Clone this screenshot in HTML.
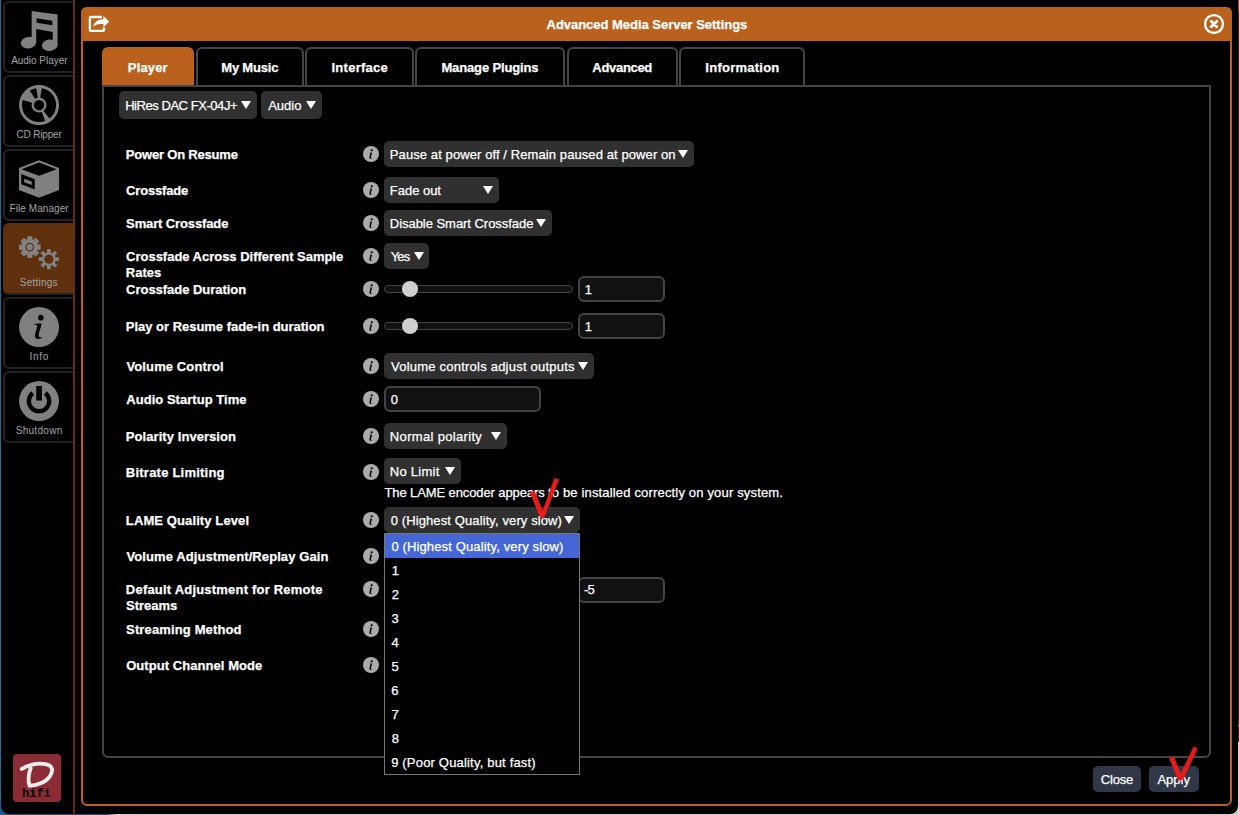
<!DOCTYPE html><html><head><meta charset="utf-8"><title>Advanced Media Server Settings</title><style>
*{box-sizing:border-box;margin:0;padding:0}
html,body{width:1239px;height:815px;overflow:hidden;background:#000}
body{position:relative;font-family:"Liberation Sans",sans-serif;font-size:13px;color:#fff}
.a{position:absolute}
.t{position:absolute;white-space:nowrap;line-height:16px;-webkit-text-stroke:0.25px #fff}
.b{font-weight:bold}
.sb{position:absolute;left:3px;width:72px;height:72px;border:2px solid #222;border-radius:6px 0 0 6px;border-right:none}
.sb.on{background:#5e300e;border-color:#5e300e #5e300e #232323 #5e300e}
.sl{position:absolute;white-space:nowrap;font-size:10px;color:#a4a4a4;line-height:12px}
.sel{position:absolute;height:26px;background:#303030;border-radius:5px}
.ar{position:absolute;width:0;height:0;border-left:5px solid transparent;border-right:5px solid transparent;border-top:8.5px solid #fff}
.inp{position:absolute;height:26px;background:#111;border:2px solid #444;border-radius:6px}
.trk{position:absolute;height:8px;width:189px;left:384px;background:#111;border:1.5px solid #444;border-radius:4px}
.thm{position:absolute;width:16px;height:16px;border-radius:8px;background:#d0d0d0}
.tab{position:absolute;top:47px;height:40px;border:2px solid #444;border-bottom:none;border-radius:6px 6px 0 0}
.tab.on{background:#b9611d;border-color:#b9611d}
.btn{position:absolute;top:766px;height:26px;background:#303848;border-radius:5px}
</style></head><body>
<div class="a" style="left:0;top:0;width:1239px;height:815px;background:linear-gradient(to right,#1c5a94 0,#17548f 108px,#cfcfcf 116px)"></div>
<div class="a" style="left:1px;top:0;width:1237px;height:813.5px;background:#000;border-radius:0 0 8px 8px"></div>
<div class="a" style="left:0;top:0;width:1px;height:800px;background:#326488"></div>
<div class="a" style="left:1px;top:0;width:1px;height:805px;background:#04080b"></div>
<div class="a" style="left:1238px;top:0;width:1px;height:742px;background:#262626"></div>
<div class="a" style="left:1238px;top:742px;width:1px;height:73px;background:#dcdcdc"></div>
<div class="a" style="left:1238px;top:724px;width:1px;height:3px;background:#a0561c"></div>
<div class="a" style="left:1238px;top:0;width:1px;height:12px;background:#8a4a18"></div>
<div class="sb" style="top:1px"></div>
<svg class="a" style="left:14px;top:6px" width="50" height="50" viewBox="0 0 815 815"><g fill="#808080"><path fill-rule="evenodd" d="M288 82L710 140V640H632V422L362 375V598H288ZM368 200L625 240V312L368 272Z"/><ellipse cx="237" cy="598" rx="126" ry="94" transform="rotate(-8 237 598)"/><ellipse cx="582" cy="640" rx="128" ry="94" transform="rotate(-8 582 640)"/></g></svg>
<div class="sb" style="top:75px"></div>
<svg class="a" style="left:14px;top:80px" width="50" height="50" viewBox="0 0 815 815"><circle cx="408" cy="408" r="302" fill="none" stroke="#808080" stroke-width="48"/><circle cx="408" cy="408" r="103" fill="none" stroke="#808080" stroke-width="38"/><path fill="#808080" d="M303.3 374.4L122.4 316.3A300 300 0 0 1 245.0 156.1L348.3 315.6A110 110 0 0 0 303.3 374.4ZM389.8 299.5L358.5 112.1A300 300 0 0 1 457.5 112.1L426.2 299.5A110 110 0 0 0 389.8 299.5ZM475.1 495.2L591.0 645.7A300 300 0 0 1 517.0 687.5L448.0 510.5A110 110 0 0 0 475.1 495.2Z"/></svg>
<div class="sb" style="top:149px"></div>
<svg class="a" style="left:14px;top:154px" width="50" height="50" viewBox="0 0 815 815"><path fill="#808080" fill-rule="evenodd" d="M408 100L735 228V585L408 712L82 585V228ZM408 140L695 250L408 355L122 250ZM118 328L338 412V580L118 495Z"/><path fill="#808080" d="M165 405L290 450V505L165 460Z"/></svg>
<div class="sb on" style="top:223px"></div>
<svg class="a" style="left:14px;top:228px" width="50" height="50" viewBox="0 0 815 815"><g fill="#828282"><rect x="216.0" y="136" width="84" height="176" rx="8" transform="rotate(0.0 258 312)"/><rect x="216.0" y="136" width="84" height="176" rx="8" transform="rotate(45.0 258 312)"/><rect x="216.0" y="136" width="84" height="176" rx="8" transform="rotate(90.0 258 312)"/><rect x="216.0" y="136" width="84" height="176" rx="8" transform="rotate(135.0 258 312)"/><rect x="216.0" y="136" width="84" height="176" rx="8" transform="rotate(180.0 258 312)"/><rect x="216.0" y="136" width="84" height="176" rx="8" transform="rotate(225.0 258 312)"/><rect x="216.0" y="136" width="84" height="176" rx="8" transform="rotate(270.0 258 312)"/><rect x="216.0" y="136" width="84" height="176" rx="8" transform="rotate(315.0 258 312)"/><circle cx="258" cy="312" r="134"/></g><circle cx="258" cy="312" r="60" fill="none" stroke="#5e300e" stroke-width="20"/><g fill="#828282"><rect x="538.0" y="342" width="60" height="166" rx="14" transform="rotate(0.0 568 508)"/><rect x="538.0" y="342" width="60" height="166" rx="14" transform="rotate(45.0 568 508)"/><rect x="538.0" y="342" width="60" height="166" rx="14" transform="rotate(90.0 568 508)"/><rect x="538.0" y="342" width="60" height="166" rx="14" transform="rotate(135.0 568 508)"/><rect x="538.0" y="342" width="60" height="166" rx="14" transform="rotate(180.0 568 508)"/><rect x="538.0" y="342" width="60" height="166" rx="14" transform="rotate(225.0 568 508)"/><rect x="538.0" y="342" width="60" height="166" rx="14" transform="rotate(270.0 568 508)"/><rect x="538.0" y="342" width="60" height="166" rx="14" transform="rotate(315.0 568 508)"/></g><circle cx="568" cy="508" r="94" fill="#5e300e" stroke="#828282" stroke-width="38"/></svg>
<div class="sb" style="top:297px"></div>
<svg class="a" style="left:14px;top:302px" width="50" height="50" viewBox="0 0 815 815"><circle cx="408" cy="408" r="326" fill="#808080"/><circle cx="437" cy="255" r="46" fill="#000"/><path fill="#000" d="M320 370C350 352 400 345 447 352C450 400 408 480 402 540C400 572 430 580 468 570C440 602 380 612 355 592C322 560 368 445 384 384C370 372 345 369 320 370Z"/></svg>
<div class="sb" style="top:371px"></div>
<svg class="a" style="left:14px;top:376px" width="50" height="50" viewBox="0 0 815 815"><circle cx="408" cy="408" r="326" fill="#808080"/><path d="M305.8 277.2A166 166 0 1 0 510.2 277.2" fill="none" stroke="#000" stroke-width="70"/><rect x="362" y="162" width="93" height="238" fill="#000"/></svg>
<div class="sl" id="s0" style="left:11.14px;top:55px;letter-spacing:-0.019px">Audio Player</div>
<div class="sl" id="s1" style="left:16.58px;top:129px;letter-spacing:-0.194px">CD Ripper</div>
<div class="sl" id="s2" style="left:9.62px;top:203px;letter-spacing:0.055px">File Manager</div>
<div class="sl" id="s3" style="left:19.77px;top:277px;letter-spacing:0.230px">Settings</div>
<div class="sl" id="s4" style="left:29.59px;top:351px;letter-spacing:0.713px">Info</div>
<div class="sl" id="s5" style="left:15.66px;top:425px;letter-spacing:0.299px">Shutdown</div>
<div class="a" style="left:73px;top:0;width:2px;height:815px;background:#5e300e"></div>
<div class="a" style="left:13px;top:754px;width:48px;height:48px;background:#8a2b36;border-radius:4px"><svg class="a" style="left:-4px;top:-4px" width="56" height="56" viewBox="0 0 815 815"><path d="M185 275C260 225 400 180 530 205C640 225 650 300 590 390C530 470 400 520 300 520C275 450 285 350 315 265" fill="none" stroke="#ececec" stroke-width="56" stroke-linecap="round" stroke-linejoin="round"/></svg><div class="a" style="left:9px;top:32.5px;font:bold 12px/14px 'Liberation Mono',monospace;color:#000;letter-spacing:0px">hifi</div></div>
<div class="a" style="left:81px;top:7px;width:1151px;height:799px;border:2px solid #b9611d;border-radius:6px"></div>
<div class="a" style="left:81px;top:7px;width:1151px;height:34px;background:#b9611d;border-radius:6px 6px 0 0"></div>
<svg class="a" style="left:70px;top:0px" width="60" height="50" viewBox="0 0 978 815"><g fill="none" stroke="#fff" stroke-width="37"><path d="M520 277H340Q324 277 324 293V488Q324 504 340 504H540Q554 504 554 488V450"/></g><path fill="#fff" d="M638 355L545 262V312C470 312 392 350 376 442C420 392 480 388 545 392V445Z"/></svg><svg class="a" style="left:1202px;top:12px" width="24" height="24" viewBox="-12 -12 24 24"><circle r="8.95" fill="none" stroke="#fff" stroke-width="2.35"/><path d="M-2.8 -2.8L2.8 2.8M2.8 -2.8L-2.8 2.8" stroke="#fff" stroke-width="2.8" stroke-linecap="round"/></svg>
<div class="tab on" style="left:102px;width:92px"></div>
<div class="tab" style="left:195.5px;width:108px"></div>
<div class="tab" style="left:305px;width:108.5px"></div>
<div class="tab" style="left:415px;width:150px"></div>
<div class="tab" style="left:566.5px;width:111px"></div>
<div class="tab" style="left:679px;width:126px"></div>
<div class="a" style="left:102px;top:85px;width:1109px;height:673px;border:2px solid #444;border-radius:0 0 6px 6px"></div>
<div class="sel" style="left:119px;top:91px;width:138px;height:28px"></div>
<div class="ar" style="left:241.4px;top:101px"></div>
<div class="sel" style="left:261px;top:91px;width:61px;height:28px"></div>
<div class="ar" style="left:306.4px;top:101px"></div>
<div class="sel" style="left:384px;top:141px;width:309.70000000000005px;height:26px"></div>
<div class="ar" style="left:678.1px;top:150px"></div>
<div class="sel" style="left:384px;top:177px;width:114.60000000000002px;height:26px"></div>
<div class="ar" style="left:483.0px;top:186px"></div>
<div class="sel" style="left:384px;top:210px;width:167.70000000000005px;height:26px"></div>
<div class="ar" style="left:536.1px;top:219px"></div>
<div class="sel" style="left:384px;top:243px;width:45.10000000000002px;height:26px"></div>
<div class="ar" style="left:413.5px;top:252px"></div>
<div class="trk" style="top:285px"></div><div class="thm" style="left:402px;top:281px"></div>
<div class="inp" style="left:578px;top:276px;width:87px"></div>
<div class="trk" style="top:322px"></div><div class="thm" style="left:402px;top:318px"></div>
<div class="inp" style="left:578px;top:313px;width:87px"></div>
<div class="sel" style="left:384px;top:353px;width:209.89999999999998px;height:26px"></div>
<div class="ar" style="left:578.3px;top:362px"></div>
<div class="inp" style="left:384px;top:386px;width:157px"></div>
<div class="sel" style="left:384px;top:423px;width:122.89999999999998px;height:26px"></div>
<div class="ar" style="left:491.3px;top:432px"></div>
<div class="sel" style="left:384px;top:458px;width:76.89999999999998px;height:26px"></div>
<div class="ar" style="left:445.3px;top:467px"></div>
<div class="sel" style="left:384px;top:507px;width:195.70000000000005px;height:26px"></div>
<div class="ar" style="left:564.1px;top:516px"></div>
<div class="inp" style="left:578px;top:577px;width:87px"></div>
<svg class="a" style="left:361px;top:144px" width="20" height="20" viewBox="0 0 815 815"><circle cx="408" cy="408" r="326" fill="#ababab"/><circle cx="437" cy="255" r="46" fill="#000"/><path fill="#000" d="M320 370C350 352 400 345 447 352C450 400 408 480 402 540C400 572 430 580 468 570C440 602 380 612 355 592C322 560 368 445 384 384C370 372 345 369 320 370Z"/></svg>
<svg class="a" style="left:361px;top:180px" width="20" height="20" viewBox="0 0 815 815"><circle cx="408" cy="408" r="326" fill="#ababab"/><circle cx="437" cy="255" r="46" fill="#000"/><path fill="#000" d="M320 370C350 352 400 345 447 352C450 400 408 480 402 540C400 572 430 580 468 570C440 602 380 612 355 592C322 560 368 445 384 384C370 372 345 369 320 370Z"/></svg>
<svg class="a" style="left:361px;top:213px" width="20" height="20" viewBox="0 0 815 815"><circle cx="408" cy="408" r="326" fill="#ababab"/><circle cx="437" cy="255" r="46" fill="#000"/><path fill="#000" d="M320 370C350 352 400 345 447 352C450 400 408 480 402 540C400 572 430 580 468 570C440 602 380 612 355 592C322 560 368 445 384 384C370 372 345 369 320 370Z"/></svg>
<svg class="a" style="left:361px;top:246px" width="20" height="20" viewBox="0 0 815 815"><circle cx="408" cy="408" r="326" fill="#ababab"/><circle cx="437" cy="255" r="46" fill="#000"/><path fill="#000" d="M320 370C350 352 400 345 447 352C450 400 408 480 402 540C400 572 430 580 468 570C440 602 380 612 355 592C322 560 368 445 384 384C370 372 345 369 320 370Z"/></svg>
<svg class="a" style="left:361px;top:279px" width="20" height="20" viewBox="0 0 815 815"><circle cx="408" cy="408" r="326" fill="#ababab"/><circle cx="437" cy="255" r="46" fill="#000"/><path fill="#000" d="M320 370C350 352 400 345 447 352C450 400 408 480 402 540C400 572 430 580 468 570C440 602 380 612 355 592C322 560 368 445 384 384C370 372 345 369 320 370Z"/></svg>
<svg class="a" style="left:361px;top:316px" width="20" height="20" viewBox="0 0 815 815"><circle cx="408" cy="408" r="326" fill="#ababab"/><circle cx="437" cy="255" r="46" fill="#000"/><path fill="#000" d="M320 370C350 352 400 345 447 352C450 400 408 480 402 540C400 572 430 580 468 570C440 602 380 612 355 592C322 560 368 445 384 384C370 372 345 369 320 370Z"/></svg>
<svg class="a" style="left:361px;top:356px" width="20" height="20" viewBox="0 0 815 815"><circle cx="408" cy="408" r="326" fill="#ababab"/><circle cx="437" cy="255" r="46" fill="#000"/><path fill="#000" d="M320 370C350 352 400 345 447 352C450 400 408 480 402 540C400 572 430 580 468 570C440 602 380 612 355 592C322 560 368 445 384 384C370 372 345 369 320 370Z"/></svg>
<svg class="a" style="left:361px;top:389px" width="20" height="20" viewBox="0 0 815 815"><circle cx="408" cy="408" r="326" fill="#ababab"/><circle cx="437" cy="255" r="46" fill="#000"/><path fill="#000" d="M320 370C350 352 400 345 447 352C450 400 408 480 402 540C400 572 430 580 468 570C440 602 380 612 355 592C322 560 368 445 384 384C370 372 345 369 320 370Z"/></svg>
<svg class="a" style="left:361px;top:426px" width="20" height="20" viewBox="0 0 815 815"><circle cx="408" cy="408" r="326" fill="#ababab"/><circle cx="437" cy="255" r="46" fill="#000"/><path fill="#000" d="M320 370C350 352 400 345 447 352C450 400 408 480 402 540C400 572 430 580 468 570C440 602 380 612 355 592C322 560 368 445 384 384C370 372 345 369 320 370Z"/></svg>
<svg class="a" style="left:361px;top:462px" width="20" height="20" viewBox="0 0 815 815"><circle cx="408" cy="408" r="326" fill="#ababab"/><circle cx="437" cy="255" r="46" fill="#000"/><path fill="#000" d="M320 370C350 352 400 345 447 352C450 400 408 480 402 540C400 572 430 580 468 570C440 602 380 612 355 592C322 560 368 445 384 384C370 372 345 369 320 370Z"/></svg>
<svg class="a" style="left:361px;top:510px" width="20" height="20" viewBox="0 0 815 815"><circle cx="408" cy="408" r="326" fill="#ababab"/><circle cx="437" cy="255" r="46" fill="#000"/><path fill="#000" d="M320 370C350 352 400 345 447 352C450 400 408 480 402 540C400 572 430 580 468 570C440 602 380 612 355 592C322 560 368 445 384 384C370 372 345 369 320 370Z"/></svg>
<svg class="a" style="left:361px;top:546px" width="20" height="20" viewBox="0 0 815 815"><circle cx="408" cy="408" r="326" fill="#ababab"/><circle cx="437" cy="255" r="46" fill="#000"/><path fill="#000" d="M320 370C350 352 400 345 447 352C450 400 408 480 402 540C400 572 430 580 468 570C440 602 380 612 355 592C322 560 368 445 384 384C370 372 345 369 320 370Z"/></svg>
<svg class="a" style="left:361px;top:579px" width="20" height="20" viewBox="0 0 815 815"><circle cx="408" cy="408" r="326" fill="#ababab"/><circle cx="437" cy="255" r="46" fill="#000"/><path fill="#000" d="M320 370C350 352 400 345 447 352C450 400 408 480 402 540C400 572 430 580 468 570C440 602 380 612 355 592C322 560 368 445 384 384C370 372 345 369 320 370Z"/></svg>
<svg class="a" style="left:361px;top:619px" width="20" height="20" viewBox="0 0 815 815"><circle cx="408" cy="408" r="326" fill="#ababab"/><circle cx="437" cy="255" r="46" fill="#000"/><path fill="#000" d="M320 370C350 352 400 345 447 352C450 400 408 480 402 540C400 572 430 580 468 570C440 602 380 612 355 592C322 560 368 445 384 384C370 372 345 369 320 370Z"/></svg>
<svg class="a" style="left:361px;top:655px" width="20" height="20" viewBox="0 0 815 815"><circle cx="408" cy="408" r="326" fill="#ababab"/><circle cx="437" cy="255" r="46" fill="#000"/><path fill="#000" d="M320 370C350 352 400 345 447 352C450 400 408 480 402 540C400 572 430 580 468 570C440 602 380 612 355 592C322 560 368 445 384 384C370 372 345 369 320 370Z"/></svg>
<div class="a" style="left:384px;top:533px;width:196px;height:242px;background:#000;border:1px solid #767676"></div>
<div class="a" style="left:385px;top:534px;width:194px;height:24px;background:#4467d5"></div>
<div class="btn" style="left:1093px;width:48px"></div>
<div class="btn" style="left:1149px;width:50px"></div>
<div class="t b" id="t0" style="left:546.53px;top:17px;letter-spacing:-0.027px">Advanced Media Server Settings</div>
<div class="t b" id="t1" style="left:127.86px;top:60px;letter-spacing:0.151px">Player</div>
<div class="t b" id="t2" style="left:221.32px;top:60px;letter-spacing:-0.209px">My Music</div>
<div class="t b" id="t3" style="left:331.45px;top:60px;letter-spacing:0.272px">Interface</div>
<div class="t b" id="t4" style="left:441.45px;top:60px;letter-spacing:-0.144px">Manage Plugins</div>
<div class="t b" id="t5" style="left:592.37px;top:60px;letter-spacing:-0.318px">Advanced</div>
<div class="t b" id="t6" style="left:705.36px;top:60px;letter-spacing:0.243px">Information</div>
<div class="t" id="t7" style="left:125.14px;top:98px;letter-spacing:-0.447px">HiRes DAC FX-04J+</div>
<div class="t" id="t8" style="left:268.15px;top:98px;letter-spacing:0.011px">Audio</div>
<div class="t b" id="t9" style="left:125.86px;top:147px;letter-spacing:-0.204px">Power On Resume</div>
<div class="t b" id="t10" style="left:126.11px;top:183px;letter-spacing:-0.169px">Crossfade</div>
<div class="t b" id="t11" style="left:126.08px;top:216px;letter-spacing:-0.123px">Smart Crossfade</div>
<div class="t b" id="t12" style="left:126.11px;top:249px;letter-spacing:-0.020px">Crossfade Across Different Sample</div>
<div class="t b" id="t13" style="left:125.86px;top:265px;letter-spacing:-0.007px">Rates</div>
<div class="t b" id="t14" style="left:126.11px;top:282px;letter-spacing:-0.034px">Crossfade Duration</div>
<div class="t b" id="t15" style="left:125.86px;top:319px;letter-spacing:-0.025px">Play or Resume fade-in duration</div>
<div class="t b" id="t16" style="left:126.50px;top:359px;letter-spacing:0.107px">Volume Control</div>
<div class="t b" id="t17" style="left:126.27px;top:392px;letter-spacing:0.035px">Audio Startup Time</div>
<div class="t b" id="t18" style="left:125.86px;top:429px;letter-spacing:0.061px">Polarity Inversion</div>
<div class="t b" id="t19" style="left:125.86px;top:465px;letter-spacing:0.224px">Bitrate Limiting</div>
<div class="t b" id="t20" style="left:125.86px;top:513px;letter-spacing:0.106px">LAME Quality Level</div>
<div class="t b" id="t21" style="left:126.50px;top:549px;letter-spacing:0.089px">Volume Adjustment/Replay Gain</div>
<div class="t b" id="t22" style="left:125.86px;top:582px;letter-spacing:0.201px">Default Adjustment for Remote</div>
<div class="t b" id="t23" style="left:126.08px;top:598px;letter-spacing:-0.019px">Streams</div>
<div class="t b" id="t24" style="left:126.08px;top:622px;letter-spacing:0.137px">Streaming Method</div>
<div class="t b" id="t25" style="left:126.20px;top:658px;letter-spacing:0.061px">Output Channel Mode</div>
<div class="t" id="t26" style="left:389.80px;top:147px;letter-spacing:0.093px">Pause at power off / Remain paused at power on</div>
<div class="t" id="t27" style="left:389.80px;top:183px;letter-spacing:-0.023px">Fade out</div>
<div class="t" id="t28" style="left:389.80px;top:216px;letter-spacing:-0.038px">Disable Smart Crossfade</div>
<div class="t" id="t29" style="left:390.64px;top:249px;letter-spacing:-0.761px">Yes</div>
<div class="t" id="t30" style="left:584.63px;top:282px;letter-spacing:0.000px">1</div>
<div class="t" id="t31" style="left:584.63px;top:319px;letter-spacing:0.000px">1</div>
<div class="t" id="t32" style="left:391.07px;top:359px;letter-spacing:0.221px">Volume controls adjust outputs</div>
<div class="t" id="t33" style="left:390.68px;top:392px;letter-spacing:0.000px">0</div>
<div class="t" id="t34" style="left:389.86px;top:429px;letter-spacing:0.325px">Normal polarity</div>
<div class="t" id="t35" style="left:389.86px;top:464px;letter-spacing:0.245px">No Limit</div>
<div class="t" id="t36" style="left:384.47px;top:485px;letter-spacing:-0.106px">The LAME encoder appears</div>
<div class="t" id="t37" style="left:547.93px;top:485px;letter-spacing:0.168px">to be installed correctly on your system.</div>
<div class="t" id="t38" style="left:390.68px;top:513px;letter-spacing:0.110px">0 (Highest Quality, very slow)</div>
<div class="t" id="t39" style="left:584.03px;top:582px;letter-spacing:-0.835px">-5</div>
<div class="t" id="t40" style="left:391.38px;top:539px;letter-spacing:0.136px">0 (Highest Quality, very slow)</div>
<div class="t" id="t41" style="left:391.63px;top:563px;letter-spacing:0.000px">1</div>
<div class="t" id="t42" style="left:391.67px;top:587px;letter-spacing:0.000px">2</div>
<div class="t" id="t43" style="left:391.55px;top:611px;letter-spacing:0.000px">3</div>
<div class="t" id="t44" style="left:391.53px;top:635px;letter-spacing:0.000px">4</div>
<div class="t" id="t45" style="left:391.48px;top:659px;letter-spacing:0.000px">5</div>
<div class="t" id="t46" style="left:391.36px;top:683px;letter-spacing:0.000px">6</div>
<div class="t" id="t47" style="left:391.60px;top:707px;letter-spacing:0.000px">7</div>
<div class="t" id="t48" style="left:391.64px;top:731px;letter-spacing:0.000px">8</div>
<div class="t" id="t49" style="left:391.15px;top:755px;letter-spacing:0.184px">9 (Poor Quality, but fast)</div>
<div class="t" id="t50" style="left:1100.84px;top:772px;letter-spacing:-0.227px">Close</div>
<div class="t" id="t51" style="left:1157.44px;top:772px;letter-spacing:0.009px">Apply</div>
<svg class="a" style="left:0;top:0" width="1239" height="815" viewBox="0 0 1239 815" fill="#e51c1c"><path d="M529.8 492.8L534.5 490.6L542.6 510.5L554.4 478L559.1 479.4L544.3 517.6L540.6 518.7Z"/><path d="M1169.1 758.1L1174 756.5L1180.6 773.4L1193.6 746.6L1197.7 748.4L1183.3 779.5L1178.2 780.5Z"/></svg>
</body></html>
